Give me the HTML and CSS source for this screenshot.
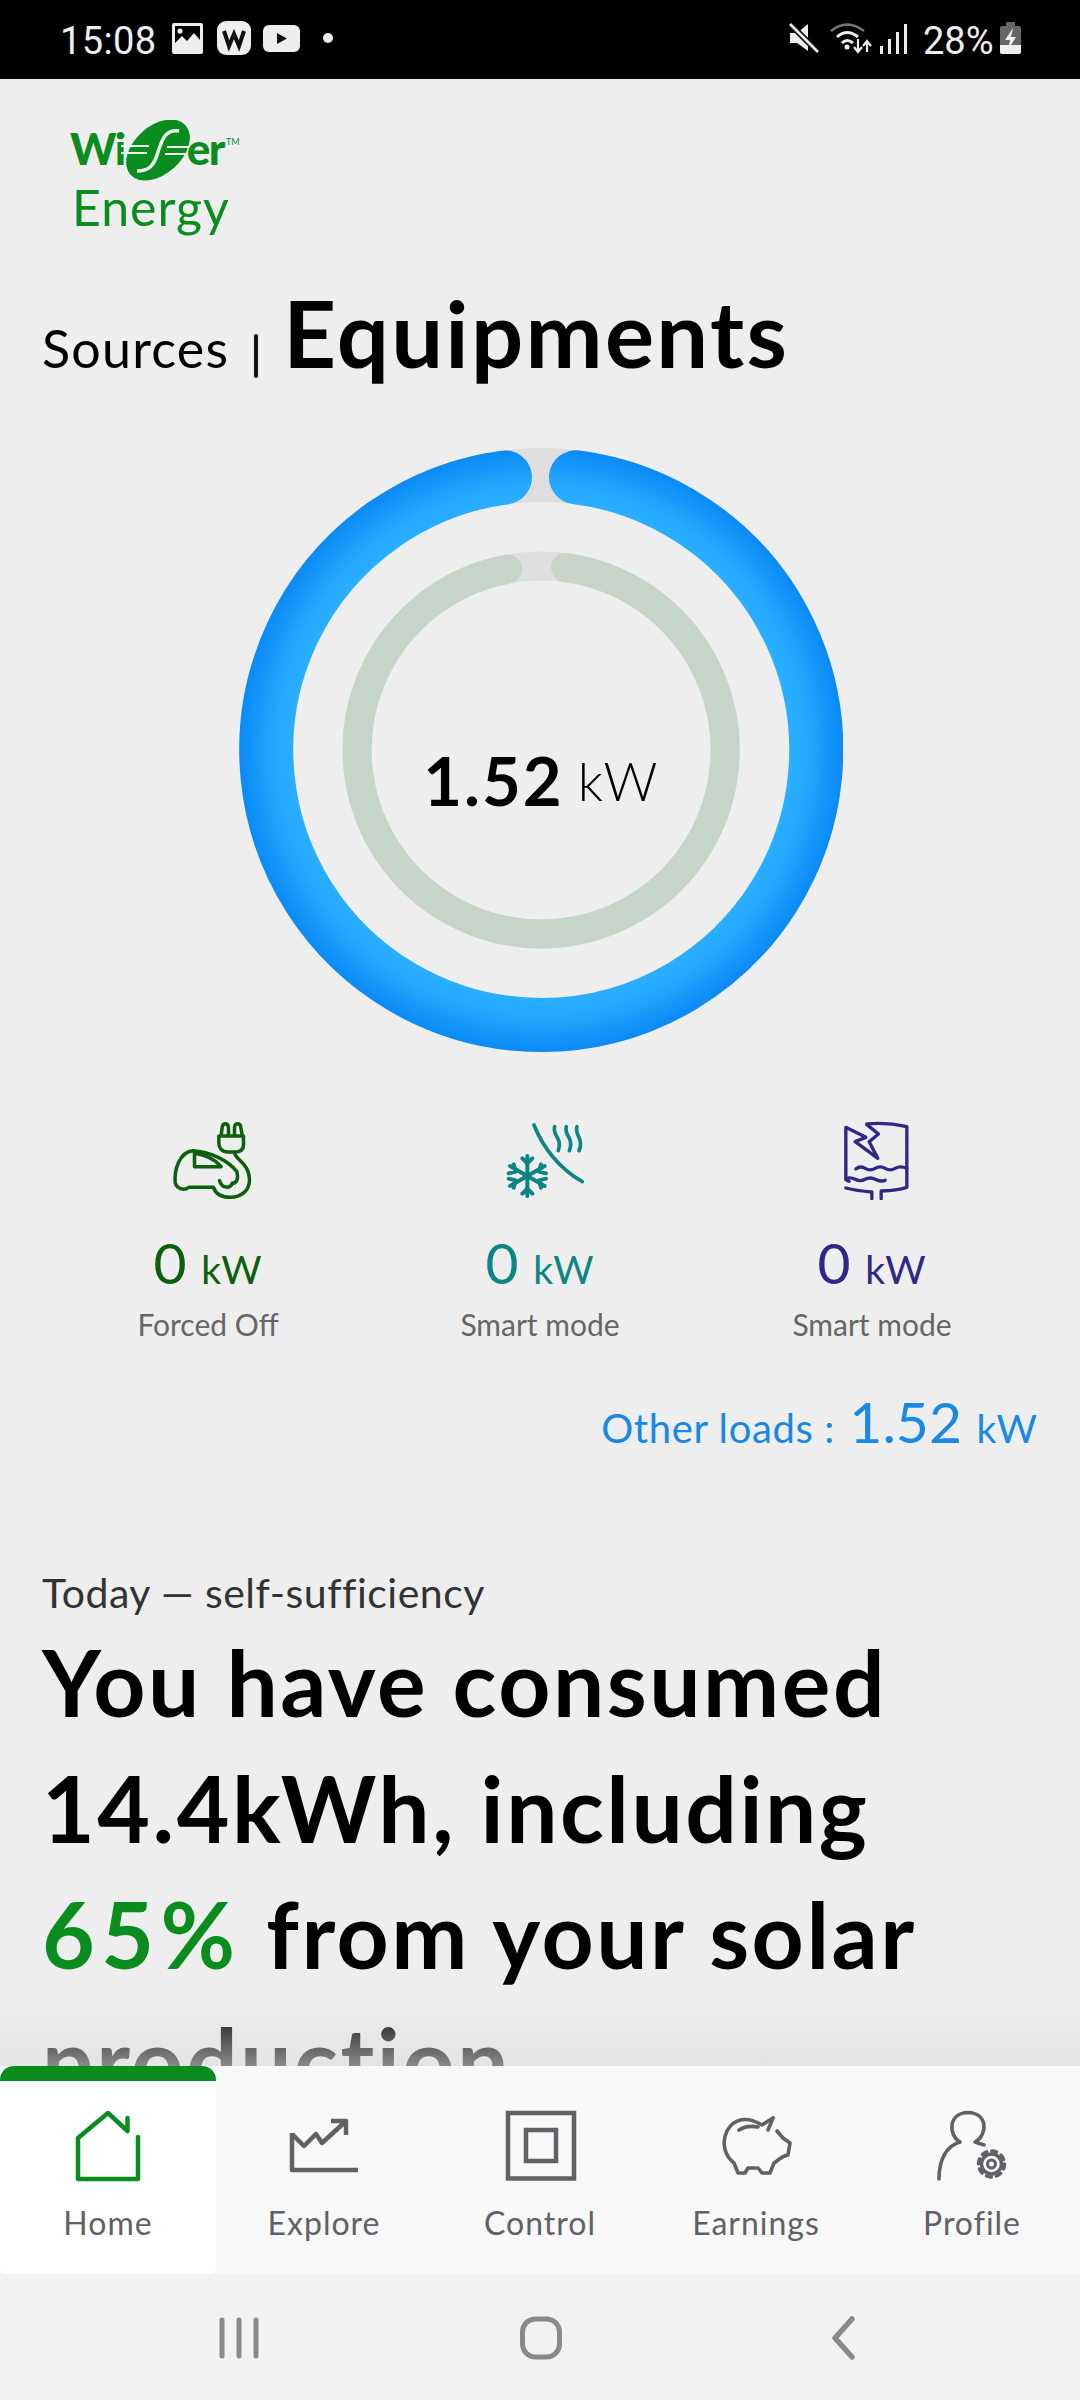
FILE: index.html
```html
<!DOCTYPE html>
<html lang="en">
<head>
<meta charset="utf-8">
<title>Wiser Energy</title>
<link rel="stylesheet" href="styles.css">
</head>
<body>
<div class="page">
  <header class="status">
    <div class="status-left">
      <span class="clock">15:08</span>
      <svg class="si-img" viewBox="0 0 31 31"><path fill="#eee" fill-rule="evenodd" d="M2 0H29Q31 0 31 2V29Q31 31 29 31H2Q0 31 0 29V2Q0 0 2 0ZM3 3V20L10 13L15 18L22 10L28 17V3Z"/><circle cx="8" cy="8" r="2.6" fill="#eee"/></svg>
      <svg class="si-w" viewBox="0 0 34 34"><rect width="34" height="34" rx="9" fill="#eee"/><path d="M7 10L12 25L17 13L22 25L27 10" fill="none" stroke="#111" stroke-width="4"/></svg>
      <svg class="si-yt" viewBox="0 0 37 27"><rect width="37" height="27" rx="6" fill="#eee"/><path d="M14 8L24 13.500L14 19Z" fill="#111"/></svg>
      <span class="si-dot"></span>
    </div>
    <div class="status-right">
      <svg class="si-mute" viewBox="0 0 30 30"><path fill="#eee" d="M1 10H8L19 1V28L8 20H1Z"/><path d="M1 1L29 29" stroke="#111" stroke-width="6"/><path d="M1 1L29 29" stroke="#eee" stroke-width="2.500"/></svg>
      <svg class="si-wifi" viewBox="0 0 42 32"><path d="M1 9Q17 -4 34 9" fill="none" stroke="#777" stroke-width="2.500"/><path d="M7 15Q17 6 28 15M12 21Q17 16 23 21" fill="none" stroke="#eee" stroke-width="3"/><circle cx="17" cy="25" r="2.500" fill="#eee"/><path d="M28 17V29M24 25L28 30L32 25M37 30V20M33 24L37 19L41 24" fill="none" stroke="#eee" stroke-width="2.200"/></svg>
      <svg class="si-sig" viewBox="0 0 28 30"><rect x="0" y="22" width="3" height="8" fill="#eee"/><rect x="8" y="15" width="3" height="15" fill="#eee"/><rect x="16" y="8" width="3" height="22" fill="#eee"/><rect x="24" y="0" width="3" height="30" fill="#eee"/></svg>
      <span class="battery-pct">28%</span>
      <svg class="si-bat" viewBox="0 0 21 32"><rect x="6" y="0" width="9" height="4" rx="1" fill="#666"/><rect x="0" y="4" width="21" height="28" rx="2" fill="#666"/><path d="M0 23H21V30Q21 32 19 32H2Q0 32 0 30Z" fill="#eee"/><path d="M13 6L5 18H10L8 28L16 15H11Z" fill="#eee"/></svg>
    </div>
  </header>

  <main class="main">
    <div class="logo">
      <div class="logo-wiser"><span>Wi</span><svg class="swirl" viewBox="120 120 76 62"><ellipse cx="159" cy="150" rx="37" ry="24" transform="rotate(-42 159 150)" fill="#0b8c1e"/><path d="M180 131C166 129 163 140 159 152C155 166 150 171 138 171" fill="none" stroke="#eee" stroke-width="3.500"/><path d="M122 146H150M122 153H148M168 147H196M166 154H194" stroke="#eee" stroke-width="2.200"/></svg><span>er</span><sup class="tm">TM</sup></div>
      <div class="logo-energy">Energy</div>
    </div>

    <div class="tabs">
      <span class="tab-off">Sources</span>
      <span class="tab-sep"></span>
      <span class="tab-on">Equipments</span>
    </div>

    <div class="gauge">
      <svg class="gauge-svg" viewBox="239 448 604 604">
        <defs>
          <radialGradient id="blue" gradientUnits="userSpaceOnUse" cx="541" cy="750" r="302">
            <stop offset="0.82" stop-color="#2aaeff"/>
            <stop offset="0.88" stop-color="#25a8ff"/>
            <stop offset="1" stop-color="#0a8af5"/>
          </radialGradient>
        </defs>
        <circle cx="541" cy="750" r="275" fill="none" stroke="#dedede" stroke-width="54"/>
        <path d="M576 477.200A275 275 0 1 1 505 477.400" fill="none" stroke="url(#blue)" stroke-width="54" stroke-linecap="round"/>
        <circle cx="541" cy="750" r="184" fill="none" stroke="#dedede" stroke-width="29"/>
        <path d="M565.500 567.600A184 184 0 1 1 507.500 569.100" fill="none" stroke="#c5d5ca" stroke-width="29" stroke-linecap="round"/>
      </svg>
      <div class="gauge-label"><b>1.52</b> <span>kW</span></div>
    </div>

    <section class="cards">
      <div class="card card-green">
        <svg class="card-icon" viewBox="175.500 60 300 240" fill="none" stroke="currentColor" stroke-width="10.500" stroke-linecap="round" stroke-linejoin="round">
          <path d="M358 108H432V135C432 150 420 156 405 156H385C368 156 358 145 358 130ZM365 106L368 82C370 68 385 68 387 82V106M405 106V82C407 68 422 68 424 82L428 106"/>
          <path d="M405 158C408 180 450 190 450 240C450 272 425 292 392 292C365 292 348 280 342 262H268C255 272 232 268 227 248C224 210 240 155 280 152C330 155 385 180 412 215C418 240 410 250 398 250C395 265 368 268 360 242"/>
          <path d="M285 158V200H365C345 176 320 165 285 160Z"/>
        </svg>
        <div class="value">0 <span class="unit">kW</span></div>
        <div class="mode">Forced Off</div>
      </div>
      <div class="card card-teal">
        <svg class="card-icon" viewBox="1173 60 300 240" fill="none" stroke="currentColor" stroke-width="11" stroke-linecap="round" stroke-linejoin="round">
          <path d="M1305 75C1330 140 1380 205 1450 245"/>
          <path d="M1367 80C1358 105 1392 115 1378 152M1402 80C1393 105 1427 115 1411 152M1434 80C1425 105 1456 115 1440 152"/>
          <g stroke-width="12">
            <path d="M1285 168V288M1233 198L1337 258M1233 258L1337 198"/>
            <path d="M1270 175L1285 190L1300 175M1270 281L1285 266L1300 281M1229 220L1250 215L1244 193M1341 236L1320 241L1326 263M1229 236L1250 241L1244 263M1341 220L1320 215L1326 193"/>
          </g>
        </svg>
        <div class="value">0 <span class="unit">kW</span></div>
        <div class="mode">Smart mode</div>
      </div>
      <div class="card card-indigo">
        <svg class="card-icon" viewBox="790.500 60 300 240" fill="none" stroke="currentColor" stroke-width="10" stroke-linecap="round" stroke-linejoin="round">
          <path d="M925 72C965 68 1010 72 1045 80V262C1020 270 1000 272 968 273V296M940 296V276C915 274 885 270 862 264"/>
          <path d="M862 238V82L922 112L890 125L958 175L932 125L960 102L925 74"/>
          <path d="M892 207Q905 196 920 205T950 205T980 205T1010 205T1045 205M862 236Q875 230 890 238T920 238T950 238T980 241M862 238Q866 244 872 244"/>
        </svg>
        <div class="value">0 <span class="unit">kW</span></div>
        <div class="mode">Smart mode</div>
      </div>
    </section>

    <div class="other"><span class="other-label">Other loads :</span> 1.52 <span class="unit">kW</span></div>

    <section class="summary">
      <p class="summary-kicker">Today — self-sufficiency</p>
      <h1 class="summary-title">You have consumed<br>14.4kWh, including<br><em>65%</em> from your solar<br>production</h1>
    </section>
    <div class="fade"></div>
  </main>

  <nav class="nav">
    <a class="nav-item active">
      <svg class="nav-icon" viewBox="58 2107 100 78" fill="none" stroke="currentColor" stroke-width="4.500" stroke-linejoin="round" stroke-linecap="round"><path d="M138 2137V2179H78V2138L108 2113L127.500 2131V2118"/></svg>
      <span>Home</span>
    </a>
    <a class="nav-item">
      <svg class="nav-icon" viewBox="274 2107 100 78" fill="none" stroke="currentColor" stroke-width="4.500" stroke-linejoin="round"><path d="M292 2133V2170H358"/><path d="M292 2134L304 2146L316 2134L322 2143L345 2122M331 2121H346V2135"/></svg>
      <span>Explore</span>
    </a>
    <a class="nav-item">
      <svg class="nav-icon" viewBox="490 2107 100 78" fill="none" stroke="currentColor" stroke-width="4.500"><rect x="508" y="2113" width="66" height="65.500"/><rect x="526" y="2130" width="30" height="31"/></svg>
      <span>Control</span>
    </a>
    <a class="nav-item">
      <svg class="nav-icon" viewBox="707 2107 100 78" fill="none" stroke="currentColor" stroke-width="3.600" stroke-linejoin="round" stroke-linecap="round"><path d="M774 2118L763 2125C748 2116 735 2118 728 2131C722 2143 726 2156 735 2163L739 2173H746L749 2168H759L763 2173H771L775 2163C780 2160 782 2156 789 2155L791 2143L784 2138L778 2131"/><path d="M774 2118L769 2130M740 2130C746 2126 754 2126 759 2127"/></svg>
      <span>Earnings</span>
    </a>
    <a class="nav-item">
      <svg class="nav-icon" viewBox="924 2107 100 78" fill="none" stroke="currentColor" stroke-width="3.600" stroke-linecap="round" stroke-linejoin="round"><path d="M962 2142C950 2135 950 2113 970 2112.500C990 2113 990 2135 977 2142L986 2145M962 2142C948 2146 941 2160 941 2179"/><circle cx="993.500" cy="2164" r="10" stroke-width="3.400"/><circle cx="993.500" cy="2164" r="13" stroke-width="3.500" stroke-dasharray="5 5.200"/><circle cx="993.500" cy="2164" r="4" stroke-width="3"/></svg>
      <span>Profile</span>
    </a>
  </nav>

  <footer class="sysbar">
    <svg class="sys-icon" viewBox="0 0 60 44" fill="none" stroke="#8a8a8a" stroke-width="5" stroke-linecap="round"><path d="M14 4V40M31 4V40M48 4V40"/></svg>
    <svg class="sys-icon" viewBox="0 0 60 44" fill="none" stroke="#8a8a8a" stroke-width="5"><rect x="10.500" y="3" width="37" height="38" rx="13"/></svg>
    <svg class="sys-icon" viewBox="0 0 60 44" fill="none" stroke="#8a8a8a" stroke-width="5.500" stroke-linecap="round" stroke-linejoin="round"><path d="M36 3L19 22L36 41"/></svg>
  </footer>
</div>
</body>
</html>
```
FILE: styles.css
```css
* { box-sizing: border-box; }
html, body { margin: 0; padding: 0; }
body { font-family: "Lato", "Noto Sans", sans-serif; background: #eee; }

.page { width: 1080px; height: 2400px; display: flex; flex-direction: column; overflow: hidden; background: #eee; }

/* status bar */
.status { height: 79px; flex: none; background: #000; display: flex; justify-content: space-between; align-items: center; color: #eee; font-family: "Roboto", sans-serif; }
.status-left { display: flex; align-items: center; padding-left: 60px; }
.status-right { display: flex; align-items: center; padding-right: 59px; }
.clock { font-size: 38px; line-height: 44px; width: 112px; letter-spacing: .4px; margin-top: 2px; }
.si-img { width: 31px; height: 31px; margin-top: -3px; }
.si-w { width: 34px; height: 34px; margin-left: 14px; margin-top: -3px; }
.si-yt { width: 37px; height: 27px; margin-left: 12px; margin-top: -3px; }
.si-dot { width: 10px; height: 10px; border-radius: 50%; background: #eee; margin-left: 23px; margin-top: -3px; }
.si-mute { width: 30px; height: 30px; margin-top: -3px; }
.si-wifi { width: 42px; height: 32px; margin-left: 11px; margin-top: -3px; }
.si-sig { width: 28px; height: 30px; margin-left: 8px; margin-top: -1px; }
.battery-pct { font-size: 38px; line-height: 44px; margin-left: 15px; width: 77px; margin-top: 2px; }
.si-bat { width: 21px; height: 32px; margin-top: -3px; }

/* main */
.main { flex: 1; min-height: 0; position: relative; overflow: hidden; }

.logo { margin: 41px 0 0 70px; color: #0b8c1e; }
.logo-wiser { display: flex; align-items: flex-start; height: 56px; font-size: 44px; line-height: 56px; font-weight: 900; letter-spacing: -1.5px; }
.swirl { width: 76px; height: 62px; margin: 0 -8px 0 -6px; flex: none; }
.tm { font-size: 9px; line-height: 12px; margin: 16px 0 0 2px; font-weight: 400; letter-spacing: 0; }
.logo-energy { font-size: 50px; line-height: 56px; margin: 3px 0 0 2px; letter-spacing: 1px; }

.tabs { display: flex; align-items: baseline; margin: 48px 0 0 42px; height: 100px; line-height: 100px; color: #000; }
.tab-off { font-size: 52px; letter-spacing: 1.2px; }
.tab-sep { width: 4px; height: 44px; background: #111; border-radius: 2px; margin: 0 25px 0 25px; position: relative; top: 10px; }
.tab-on { font-size: 92px; font-weight: 700; letter-spacing: 2.3px; }

.gauge { position: relative; width: 604px; height: 604px; margin: 65px 0 0 239px; }
.gauge-svg { display: block; width: 604px; height: 604px; }
.gauge-label { position: absolute; inset: 0; padding-top: 60px; display: flex; align-items: center; justify-content: center; gap: 14px; font-size: 67px; line-height: 65px; color: #000; }
.gauge-label b { font-weight: 700; letter-spacing: 2px; }
.gauge-label span { font-size: 53px; font-weight: 300; letter-spacing: 1.4px; }

.cards { display: grid; grid-template-columns: repeat(3, 332px); margin: 68px 0 0 42px; }
.card { display: flex; flex-direction: column; align-items: center; }
.card-green { color: #0c5f0c; }
.card-teal { color: #0d8585; }
.card-indigo { color: #2f2885; }
.card-icon { width: 100px; height: 80px; display: block; }
.value { font-size: 57px; line-height: 64px; margin-top: 30px; white-space: pre; font-weight: 400; }
.unit { font-size: 39px; font-weight: 400; letter-spacing: 1px; }
.mode { font-size: 30px; line-height: 40px; margin-top: 3px; color: #666; }

.other { margin: 45px 42px 0 0; text-align: right; font-size: 57px; line-height: 64px; color: #1a88e5; font-weight: 400; }
.other-label { font-size: 40px; font-weight: 400; letter-spacing: .6px; }

.summary { margin: 109px 0 0 42px; }
.summary-kicker { margin: 0; font-size: 41px; line-height: 48px; color: #333; letter-spacing: .5px; }
.summary-title { margin: 2px 0 0; font-size: 91px; line-height: 126px; font-weight: 700; color: #000; letter-spacing: 2.5px; }
.summary-title em { font-style: normal; color: #0b8c1e; letter-spacing: 6.500px; }

.fade { position: absolute; left: 0; right: 0; bottom: 0; height: 70px; background: linear-gradient(rgba(222,222,222,0), rgba(222,222,222,.62)); }

/* bottom nav */
.nav { height: 208px; flex: none; display: grid; grid-template-columns: repeat(5, 216px); background: #f8f8f8; }
.nav-item { display: flex; flex-direction: column; align-items: center; color: #606165; padding-top: 41px; font-size: 32px; line-height: 40px; letter-spacing: 1px; }
.nav-item.active { background: #fff; color: #606165; border-top: 15px solid #0b8c1e; border-radius: 14px 14px 6px 6px / 14px 14px 6px 6px; padding-top: 26px; }
.nav-item.active .nav-icon { color: #0b8c1e; }
.nav-icon { width: 100px; height: 78px; display: block; }
.nav-item span { margin-top: 18px; }

/* system bar */
.sysbar { height: 126px; flex: none; background: #f2f2f2; display: grid; grid-template-columns: 208px 60px 244px 60px 244px 60px; align-items: center; padding: 0; }
.sys-icon { width: 60px; height: 44px; display: block; margin-top: 2px; }
.sys-icon:nth-child(1) { grid-column: 2; }
.sys-icon:nth-child(2) { grid-column: 4; }
.sys-icon:nth-child(3) { grid-column: 6; }
```
